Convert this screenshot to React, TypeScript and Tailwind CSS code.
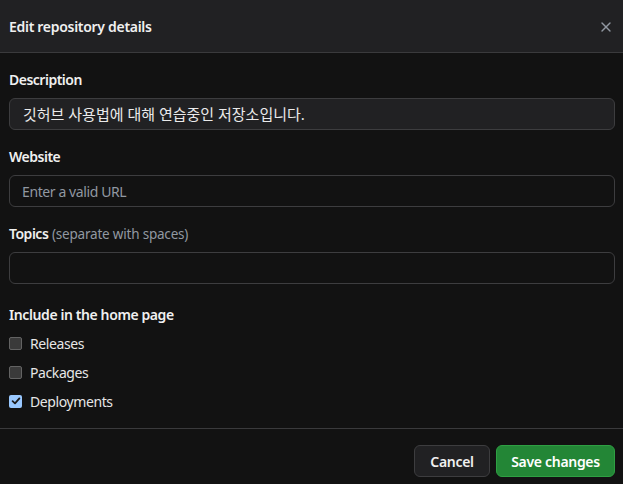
import { X } from 'lucide-react'

const font = { fontFamily: '"Noto Sans", "Noto Sans CJK KR", sans-serif' }

function Checkbox({ checked, label }: { checked?: boolean; label: string }) {
  return (
    <label className="flex items-center h-5 gap-2">
      {checked ? (
        <span className="w-[13px] h-[13px] rounded-[2px] bg-[#99c8ff] flex items-center justify-center shrink-0">
          <svg width="10" height="10" viewBox="0 0 10 10" fill="none">
            <path d="M1.6 5.2 L4 7.4 L8.4 2.4" stroke="#1b1b1b" strokeWidth="1.8" strokeLinecap="round" strokeLinejoin="round" />
          </svg>
        </span>
      ) : (
        <span className="w-[13px] h-[13px] rounded-[2px] bg-[#3a3a3a] border border-[#636363] shrink-0" />
      )}
      <span className="text-[14px] text-[#e6e6e6] tracking-[-0.4px]">{label}</span>
    </label>
  )
}

export default function App() {
  return (
    <div className="w-[623px] h-[484px] bg-[#121212] text-[#f0f0f0] flex flex-col" style={font}>
      <div className="h-[53px] bg-[#212123] border-b border-[#3a3a3c] flex items-center justify-between pl-[9px] pr-[9px] shrink-0">
        <h2 className="text-[14px] font-semibold text-[#f0f0f0] tracking-[-0.3px]">Edit repository details</h2>
        <X size={16} strokeWidth={2} className="text-[#9198a1] mt-[1px]" />
      </div>

      <div className="flex flex-col px-[9px] pt-[17px] pb-[17px] border-b border-[#3a3a3c]">
        <span className="text-[14px] font-semibold leading-5 tracking-[-0.5px]">Description</span>
        <div className="mt-2 h-[32px] rounded-md bg-[#212123] border border-[#3d3d3f] flex items-center px-[13px] text-[15px] text-[#eaeaea] w-[606px]">
          깃허브 사용법에 대해 연습중인 저장소입니다.
        </div>

        <span className="mt-[17px] text-[14px] font-semibold leading-5 tracking-[-0.5px]">Website</span>
        <div className="mt-2 h-[32px] rounded-md bg-[#121212] border border-[#3d3d3f] flex items-center px-[12px] text-[14px] text-[#9198a1] w-[606px] tracking-[-0.4px]">
          Enter a valid URL
        </div>

        <span className="mt-[17px] text-[14px] leading-5">
          <span className="font-semibold tracking-[-0.5px]">Topics</span>{' '}
          <span className="text-[13.5px] text-[#9198a1] tracking-[-0.2px]">(separate with spaces)</span>
        </span>
        <div className="mt-2 h-[32px] rounded-md bg-[#121212] border border-[#3d3d3f] w-[606px]" />

        <span className="mt-[21px] text-[14px] font-semibold leading-5 tracking-[-0.4px]">Include in the home page</span>
        <div className="mt-[8px] flex flex-col gap-[9px]">
          <Checkbox label="Releases" />
          <Checkbox label="Packages" />
          <Checkbox checked label="Deployments" />
        </div>
      </div>

      <div className="flex justify-end gap-[6px] pt-[16px] pr-[8px]">
        <button className="h-[32px] w-[76px] rounded-md bg-[#212123] border border-[#3d3d3f] text-[14px] font-semibold text-[#f0f0f0] tracking-[-0.3px]">
          Cancel
        </button>
        <button className="h-[32px] w-[119px] rounded-md bg-[#238636] border border-[#2ea043] text-[14px] font-semibold text-white tracking-[-0.3px]">
          Save changes
        </button>
      </div>
    </div>
  )
}
